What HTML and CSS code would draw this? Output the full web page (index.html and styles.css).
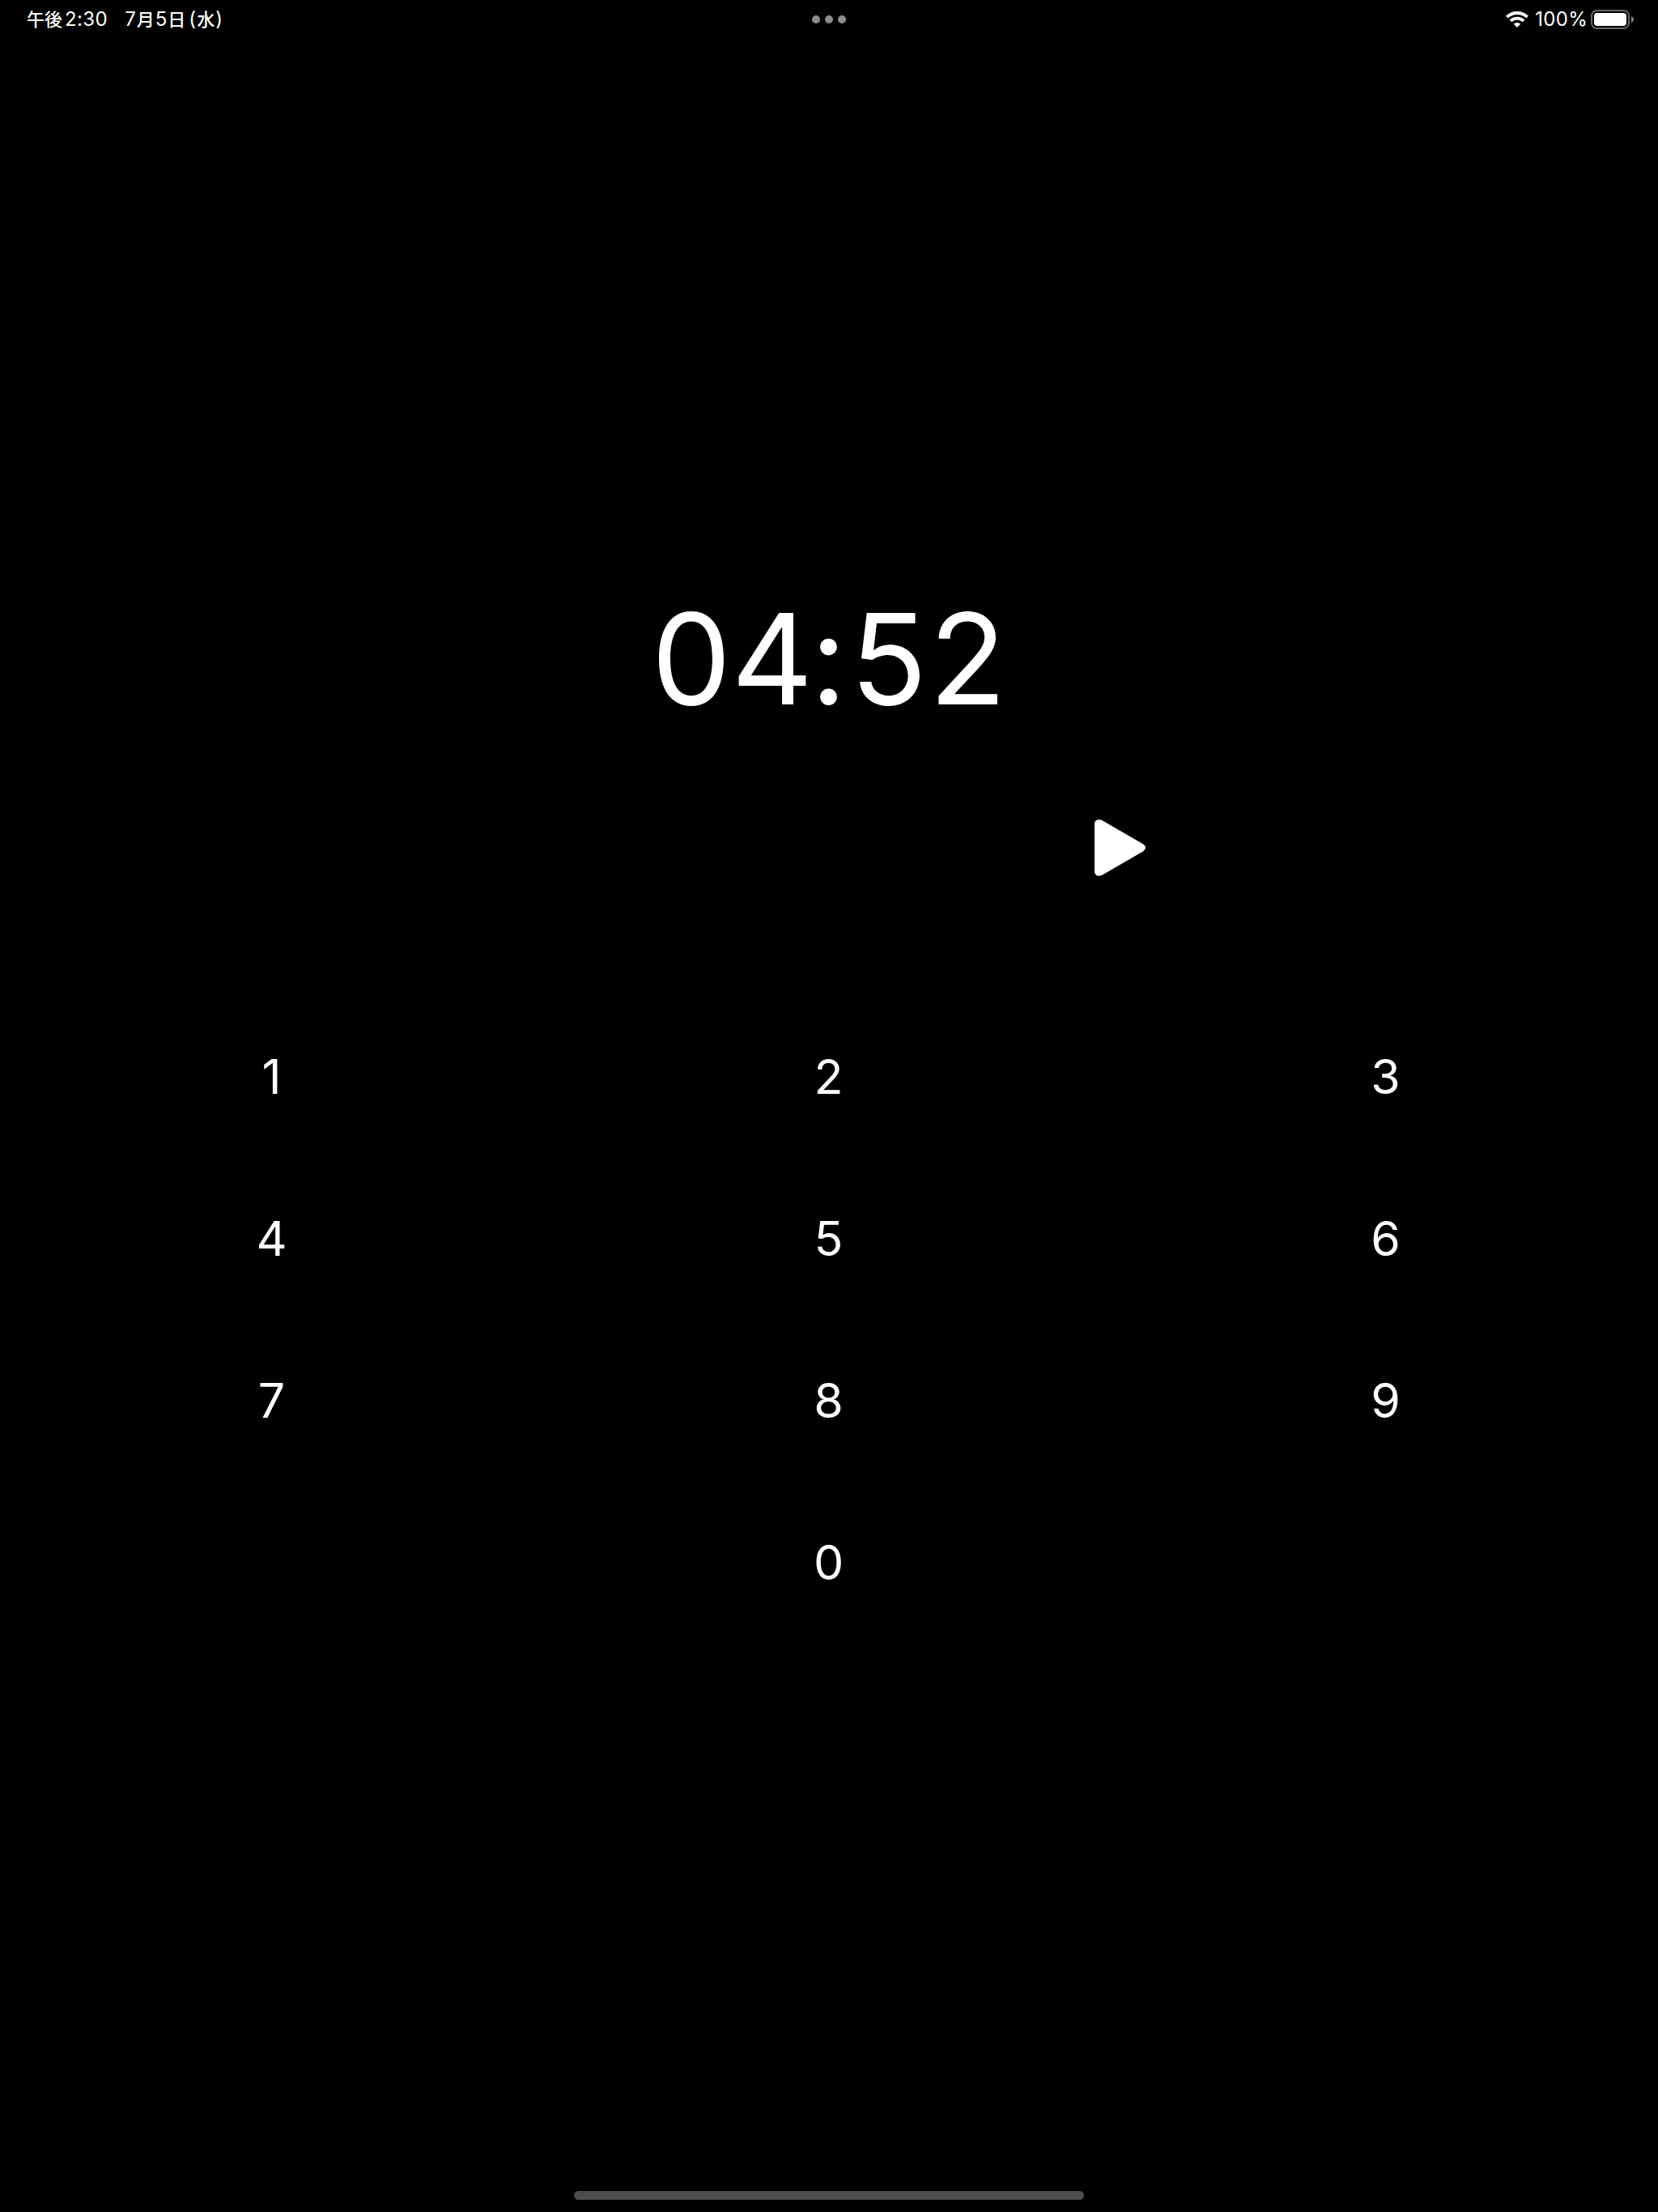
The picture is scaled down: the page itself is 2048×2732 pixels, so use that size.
FILE: index.html
```html
<!DOCTYPE html>
<html lang="ja">
<head>
<meta charset="utf-8">
<title>Timer</title>
<link rel="stylesheet" href="styles.css">
</head>
<body>
<div class="screen">
  <header class="status-bar">
    <div class="status-left">
      <span class="clock"><span class="kanji">午後</span><span class="hour">2:30</span></span>
      <span class="date"><span>7</span><span class="kanji">月</span><span>5</span><span class="kanji">日</span><span class="paren">(</span><span class="kanji">水</span><span>)</span></span>
    </div>
    <div class="multitask"><i></i><i></i><i></i></div>
    <div class="status-right">
      <svg class="wifi" viewBox="0 0 28 20" width="28" height="20">
        <g fill="none" stroke="#fff" stroke-width="3.9">
          <path d="M1.4 7.1a18 18 0 0 1 25.2 0"/>
          <path d="M5.9 11.9a11.7 11.7 0 0 1 16.2 0"/>
        </g>
        <path fill="#fff" d="M14 20l-4.3-4.4a6.3 6.3 0 0 1 8.6 0z"/>
      </svg>
      <span class="percent">100%</span>
      <svg class="battery" viewBox="0 0 54 24" width="54" height="24">
        <rect x="1" y="1" width="46" height="22" rx="6.5" fill="none" stroke="#666" stroke-width="2"/>
        <rect x="4" y="4" width="40" height="16" rx="4" fill="#fff"/>
        <path d="M50 8c4 1.6 4 6.4 0 8z" fill="#808080"/>
      </svg>
    </div>
  </header>
  <main>
    <div class="time">04<span class="colon">:</span><span class="tens">5</span>2</div>
    <div class="controls">
      <svg class="play" viewBox="0 0 63 70" width="63" height="70">
        <path fill="#fff" d="M0 5.5C0 1 4.5-1.3 9.500 1.300L60 30.500Q63 32.500 63 35Q63 37.500 60 39.500L9.500 68.700C4.500 71.300 0 69 0 64.500Z"/>
      </svg>
    </div>
    <div class="keypad">
      <span>1</span><span>2</span><span>3</span>
      <span>4</span><span>5</span><span>6</span>
      <span>7</span><span>8</span><span>9</span>
      <span class="zero">0</span>
    </div>
  </main>
  <div class="home-indicator"></div>
</div>
</body>
</html>
```
FILE: styles.css
```css
* { box-sizing: border-box; }
body {
  margin: 0;
  background: #000;
  color: #fff;
  font-family: Inter, "Noto Sans CJK JP", sans-serif;
}
.screen {
  width: 2048px;
  height: 2732px;
  display: flex;
  flex-direction: column;
  align-items: center;
  overflow: hidden;
}
.status-bar {
  width: 100%;
  height: 48px;
  display: grid;
  grid-template-columns: 1fr auto 1fr;
  align-items: center;
  padding: 0 29px 0 33px;
  font-size: 24px;
  line-height: 48px;
}
.status-left, .status-right, .clock, .date { display: flex; align-items: center; }
.status-left { font-weight: 400; }
.clock { gap: 3px; }
.hour { letter-spacing: 0.4px; }
.date { margin-left: 21px; gap: 1px; }
.kanji {
  font-family: "Noto Sans CJK JP", sans-serif;
  font-size: 22px;
  font-weight: 500;
  line-height: 44px;
  padding-bottom: 4px;
}
.paren { margin-left: 3px; }
.multitask { display: flex; gap: 6px; margin-right: 4px; }
.multitask i { width: 10px; height: 10px; border-radius: 50%; background: #8c8c8c; }
.status-right { justify-content: flex-end; }
.percent { margin: 0 4px 0 8px; letter-spacing: 0.3px; }
main { width: 100%; flex: 1; padding-top: 666px; }
.time {
  text-align: center;
  font-size: 156px;
  line-height: 200px;
  font-feature-settings: "calt" 0;
  letter-spacing: 0.5px;
}
.colon { margin: 0 4px 0 -4px; }
.tens { margin-right: 2px; }
.controls {
  height: 266px;
  display: flex;
  align-items: center;
  padding-left: 1352px;
}
.keypad {
  display: grid;
  grid-template-columns: repeat(3, 656px);
  grid-auto-rows: 200px;
  column-gap: 32px;
  justify-content: center;
  margin: 50px 1px 0 0;
  font-size: 59px;
  line-height: 200px;
  text-align: center;
}
.zero { grid-column: 2; }
.home-indicator {
  width: 630px;
  height: 11px;
  margin-bottom: 15px;
  border-radius: 6px;
  background: #4c4c4c;
}
```
